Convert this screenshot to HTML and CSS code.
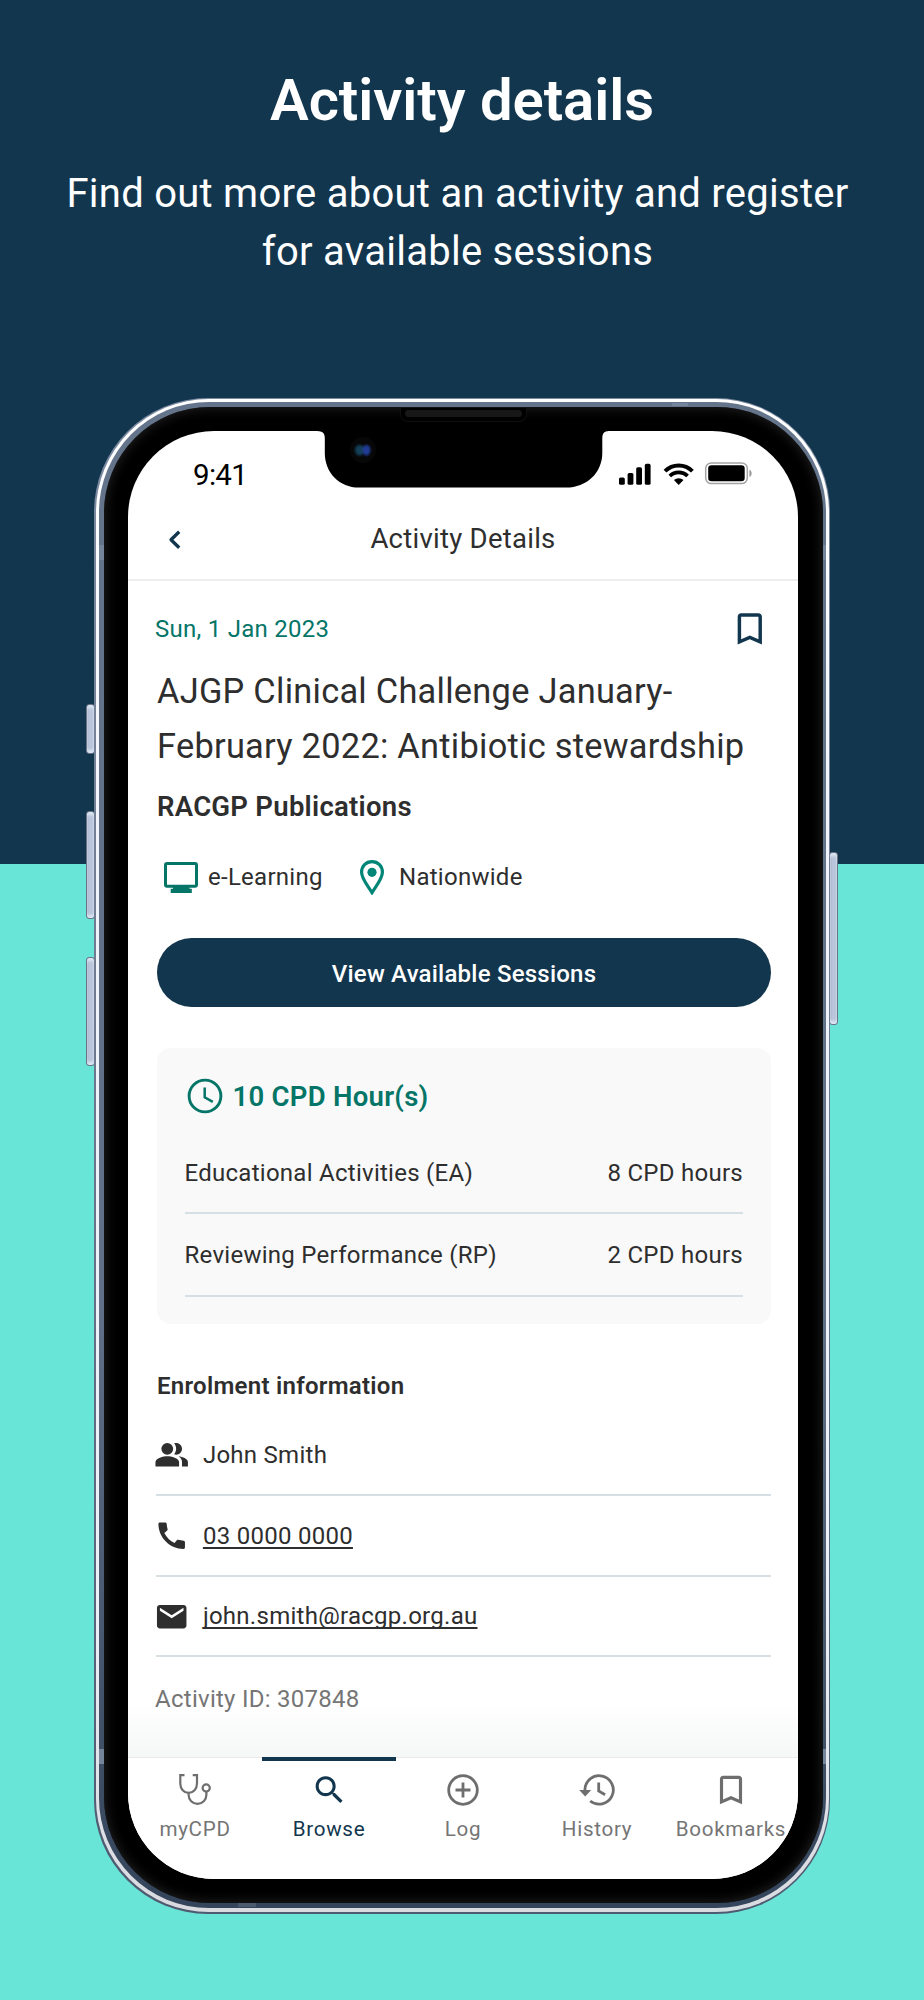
FILE: index.html
```html
<!DOCTYPE html>
<html lang="en">
<head>
<meta charset="utf-8">
<title>Activity details</title>
<link rel="stylesheet" href="styles.css">
</head>
<body>
<main class="poster">
  <h1 class="headline">Activity details</h1>
  <p class="tagline">Find out more about an activity and register<br>for available sessions</p>

  <div class="phone">
    <i class="key key-mute"></i><i class="key key-up"></i><i class="key key-down"></i><i class="key key-power"></i>
    <div class="edge"><div class="rim"><div class="band">
      <i class="antenna a-tl"></i><i class="antenna a-bl"></i><i class="antenna a-tr"></i><i class="antenna a-br"></i><i class="antenna a-top"></i><i class="antenna a-bot"></i>
      <div class="bezel">
      <div class="screen">
        <div class="status">
          <span class="clock">9:41</span>
          <svg class="status-icons" viewBox="0 0 136 24" width="136" height="24">
            <g><rect x="1" y="15.4" width="5.8" height="7.4" rx="1.6"/><rect x="9.6" y="11" width="5.8" height="11.8" rx="1.6"/><rect x="18.2" y="5.2" width="5.8" height="17.6" rx="1.6"/><rect x="26.8" y="1.8" width="5.8" height="21" rx="1.6"/></g>
            <g fill="none" stroke="#000"><path d="M47 9.2A19.3 19.3 0 0 1 74.400 9.2" stroke-width="3.9"/><path d="M51.800 14A12.700 12.700 0 0 1 69.600 14" stroke-width="3.7"/></g>
            <path d="M60.700 22.9L55.900 18.100A6.900 6.900 0 0 1 65.500 18.100Z"/>
            <rect x="87.700" y=".9" width="41.600" height="20.700" rx="5.600" fill="none" stroke="#000" stroke-opacity=".36" stroke-width="1.5"/>
            <rect x="90.200" y="3.300" width="36.500" height="16" rx="3.300"/>
            <path d="M131.400 7.700c3 1 3 6.200 0 7.200z" fill-opacity=".4"/>
          </svg>
        </div>
        <div class="appbar">
          <svg class="back" viewBox="0 0 14 22" width="14" height="22"><path d="M11.200 2.700L3 10.700l8.200 8" fill="none" stroke="#12364e" stroke-width="3.300" stroke-linejoin="round"/></svg>
          <span>Activity Details</span>
        </div>

        <div class="content">
          <div class="date-row">
            <span class="date">Sun, 1 Jan 2023</span>
            <svg class="save" viewBox="0 0 24 24" width="41.600" height="41.600"><path fill="#12364e" d="M17 3H7c-1.100 0-1.990.9-1.990 2L5 21l7-3 7 3V5c0-1.100-.9-2-2-2zm0 15l-5-2.180L7 18V5h10v13z"/></svg>
          </div>
          <h2 class="title">AJGP Clinical Challenge January-<br>February 2022: Antibiotic stewardship</h2>
          <div class="provider">RACGP Publications</div>
          <div class="meta">
            <svg class="monitor" viewBox="0 0 34 31" width="34" height="31"><rect x="1.500" y="1.500" width="31" height="22.800" rx="1.500" fill="none" stroke="#047567" stroke-width="3"/><path fill="#047567" d="M9 25h16.500v1.700h2.300V31H6.700v-4.300H9z"/></svg>
            <span class="m-learn">e-Learning</span>
            <svg class="pin" viewBox="0 0 24 35" width="24" height="35"><path d="M12 1.700C6 1.700 1.600 6.200 1.600 12.200c0 6.500 6 13.200 10.400 20.400 4.400-7.200 10.400-13.900 10.400-20.400C22.400 6.200 18 1.700 12 1.700z" fill="none" stroke="#008577" stroke-width="3.200"/><circle cx="12" cy="12.300" r="4.600" fill="#008577"/></svg>
            <span class="m-nation">Nationwide</span>
          </div>
          <button class="cta">View Available Sessions</button>

          <section class="card">
            <div class="hours">
              <svg viewBox="0 0 36 36" width="36" height="36" fill="none" stroke="#047567"><circle cx="18" cy="18" r="15.900" stroke-width="2.900"/><path d="M17.700 9.500v9.800l8.100 4.500" stroke-width="2.500"/></svg>
              <span>10 CPD Hour(s)</span>
            </div>
            <div class="cpd"><span>Educational Activities (EA)</span><span class="val">8 CPD hours</span></div>
            <div class="cpd"><span>Reviewing Performance (RP)</span><span class="val">2 CPD hours</span></div>
          </section>

          <h3 class="enrol">Enrolment information</h3>
          <div class="contact">
            <svg viewBox="0 0 24 24" width="35.400" height="35.400"><path d="M16.670 13.130C18.040 14.060 19 15.320 19 17v3h4v-3c0-2.180-3.570-3.470-6.330-3.870z"/><circle cx="9" cy="8" r="4"/><path d="M15 12c2.210 0 4-1.790 4-4s-1.790-4-4-4c-.47 0-.91.1-1.330.24C14.500 5.270 15 6.580 15 8s-.5 2.730-1.330 3.760c.42.14.86.24 1.330.24z"/><path d="M9 13c-2.670 0-8 1.340-8 4v3h16v-3c0-2.660-5.330-4-8-4z"/></svg>
            <span class="name">John Smith</span>
          </div>
          <div class="contact">
            <svg viewBox="0 0 24 24" width="35.400" height="35.400"><path d="M20.010 15.380c-1.230 0-2.420-.2-3.530-.56-.35-.12-.74-.03-1.010.24l-1.570 1.970c-2.830-1.350-5.480-3.900-6.890-6.830l1.950-1.660c.27-.28.35-.67.24-1.020-.37-1.110-.56-2.300-.56-3.530 0-.54-.45-.99-.99-.99H4.190C3.650 3 3 3.240 3 3.990 3 13.280 10.730 21 20.010 21c.71 0 .99-.63.99-1.180v-3.450c0-.54-.45-.99-.99-.99z"/></svg>
            <a class="tel">03 0000 0000</a>
          </div>
          <div class="contact">
            <svg viewBox="0 0 24 24" width="35.400" height="35.400"><path d="M20 4H4c-1.100 0-1.990.9-1.990 2L2 18c0 1.100.9 2 2 2h16c1.100 0 2-.9 2-2V6c0-1.100-.9-2-2-2zm0 4l-8 5-8-5V6l8 5 8-5v2z"/></svg>
            <a class="mail">john.smith@racgp.org.au</a>
          </div>
          <div class="activity-id">Activity ID: 307848</div>
        </div>

        <nav class="tabs">
          <div class="tab">
            <svg viewBox="0 0 38 38" width="38" height="38" fill="none" stroke="#6e6e6e" stroke-width="2.200"><path d="M8.500 4.200H4.300v8.300c0 5.400 3.600 9.300 8.300 9.300s8.400-3.900 8.400-9.300V4.200h-4.300M12.600 21.800v2c0 5.100 4 9 8.900 9s8.900-3.900 8.900-9v-3.500"/><circle cx="30.200" cy="17" r="3.600"/></svg>
            <span class="t1">myCPD</span>
          </div>
          <div class="tab active">
            <svg viewBox="0 0 24 24" width="37" height="37" fill="#12364e"><path d="M15.500 14h-.79l-.28-.27C15.410 12.590 16 11.110 16 9.500 16 5.910 13.090 3 9.500 3S3 5.910 3 9.500 5.910 16 9.500 16c1.610 0 3.090-.59 4.230-1.570l.27.28v.79l5 4.990L20.490 19l-4.990-5zm-6 0C7.010 14 5 11.990 5 9.500S7.010 5 9.500 5 14 7.010 14 9.500 11.990 14 9.500 14z"/></svg>
            <span class="t2">Browse</span>
          </div>
          <div class="tab">
            <svg viewBox="0 0 38 38" width="38" height="38" fill="none" stroke="#6e6e6e" stroke-width="2.800"><circle cx="19" cy="19" r="14.300"/><path d="M19 11.500v15M11.500 19h15"/></svg>
            <span class="t3">Log</span>
          </div>
          <div class="tab">
            <svg viewBox="0 0 38 38" width="38" height="38" fill="none" stroke="#6e6e6e" stroke-width="2.800"><path d="M6.900 19A14.200 14.200 0 1 1 12.200 30M20.700 11.500v8.400l6.400 3.800"/><path d="M1.200 18.900h12l-6 6.700z" fill="#6e6e6e" stroke="none"/></svg>
            <span class="t4">History</span>
          </div>
          <div class="tab">
            <svg viewBox="0 0 24 24" width="38" height="38" fill="#6e6e6e"><path d="M17 3H7c-1.100 0-1.990.9-1.990 2L5 21l7-3 7 3V5c0-1.100-.9-2-2-2zm0 15l-5-2.180L7 18V5h10v13z"/></svg>
            <span class="t5">Bookmarks</span>
          </div>
        </nav>

        <svg class="notch" viewBox="0 0 290 58" width="290" height="58">
          <path d="M0 0v.2c5 0 6.800 2.600 6.800 7V22c0 20 15 34.600 34 34.600h207.500c20 0 36-14.600 36-34.600V7.200c0-4.400 1.700-7 5.700-7V0z" fill="#000"/>
          <circle cx="45" cy="19" r="13" fill="#070707"/>
          <g class="lens"><ellipse cx="41.500" cy="19.200" rx="4.500" ry="5.500" fill="#14405a"/>
          <ellipse cx="48.500" cy="19.200" rx="4" ry="5.500" fill="#213b94"/></g>
        </svg>
      </div>
      <i class="speaker"></i>
    </div></div></div></div>
  </div>
</main>
</body>
</html>
```
FILE: styles.css
```css
* { box-sizing: border-box; }
body { margin: 0; font-family: Roboto, "Liberation Sans", sans-serif; color: #2e2e2e; }
h1, h2, h3, p { margin: 0; font-weight: 400; }
svg { display: block; flex: none; }

.poster {
  width: 924px; height: 2000px; padding-top: 60px; overflow: hidden;
  background: linear-gradient(#12364e 0 864px, #69e5d8 864px);
  color: #fff; text-align: center;
}
.headline { font-size: 58px; line-height: 80px; font-weight: 600; letter-spacing: -.05px; }
.tagline { margin-top: 25px; font-size: 40px; line-height: 58px; letter-spacing: .27px; padding-right: 9px; white-space: nowrap; }

.phone { position: relative; width: 736px; margin: 117px 0 0 94px; text-align: left; color: #2e2e2e; }
.edge { position: relative; padding: 1px 1.500px 1.500px; border-radius: 114px; background: linear-gradient(#7d8ba1, #6d7a90 40%, #4e5a70); }
.rim { padding: 3px 3px 4px; border-radius: 113px; background: linear-gradient(#fff, #f1f3fa 30%, #eef0f7 80%, #d8dae0); }
.band { position: relative; padding: 5px 3px 5px 5px; border-radius: 110px; background: linear-gradient(#64748b, #5f7088 60%, #34445a); }
.bezel {
  position: relative; padding: 24px; border-radius: 106px;
  background: #000; box-shadow: inset 0 0 12px 1px #222;
}
.screen { position: relative; display: flex; flex-direction: column; width: 670px; height: 1448px; margin: 0 auto; background: #fff; border-radius: 86px; overflow: hidden; }

.key { position: absolute; width: 9px; border-radius: 3px; border: 1px solid #6a7488; background: linear-gradient(90deg, #8d97ac, #bcc8de 40%, #adb9d1); box-shadow: inset 0 3px 3px #dce6f2, inset 0 -3px 3px #dce6f2; }
.key-mute { left: -8px; top: 306px; height: 50px; }
.key-up { left: -8px; top: 413px; height: 108px; }
.key-down { left: -8px; top: 559px; height: 109px; }
.key-power { right: -8px; top: 454px; height: 173px; }
.antenna { position: absolute; background: #73849b; }
.a-tl, .a-bl { left: 0; width: 5px; height: 15px; }
.a-tr, .a-br { right: 0; width: 3px; height: 15px; }
.a-tl, .a-tr { top: 143px; }
.a-bl, .a-br { bottom: 144px; }
.a-top { top: 1px; right: 138px; width: 16px; height: 3px; }
.a-bot { bottom: 1px; left: 139px; width: 18px; height: 4px; background: #4c5a6d; }
.speaker { position: absolute; top: 1px; left: 296px; width: 127px; height: 14px; border-radius: 0 0 8px 8px; border: 1px solid #0f0f0f; border-top: 0; background: #000; }
.speaker::after { content: ""; position: absolute; left: 4px; right: 4px; top: 2px; height: 7px; border-radius: 4px; background: #171717; }
.notch { position: absolute; top: 0; left: 190px; }
.lens { filter: blur(1.200px); }

.status { display: flex; align-items: center; justify-content: space-between; height: 88px; padding: 0 44px 0 65px; color: #000; }
.clock { font-size: 29.500px; letter-spacing: -.7px; }
.status-icons { margin-top: -2px; }
.appbar { position: relative; height: 62px; padding-bottom: 21px; border-bottom: 2px solid #ededed; display: flex; align-items: center; justify-content: center; font-size: 27.500px; letter-spacing: .26px; }
.back { position: absolute; left: 40px; top: 9.500px; }

.content { flex: 1; padding: 27px 27px 0 29px; background: linear-gradient(#fff 1120px, #f6f7f7); font-size: 24px; letter-spacing: .27px; }
.date-row { display: flex; align-items: center; justify-content: space-between; height: 42px; margin: 0 0 0 -2px; color: #047567; }
.title { margin-top: 14px; font-size: 34.400px; line-height: 55px; letter-spacing: .26px; white-space: nowrap; }
.provider { margin-top: 15px; font-size: 27.500px; line-height: 36px; font-weight: 600; letter-spacing: .26px; }
.meta { display: flex; align-items: center; height: 42px; margin-top: 31px; padding-left: 7px; }
.m-learn { margin-left: 10px; width: 116px; }
.pin { margin-left: 36px; }
.m-nation { margin-left: 15px; }
.cta { display: block; width: 100%; height: 69px; margin-top: 40px; padding: 2px 0 0; border: 0; border-radius: 35px; background: #12364e; color: #fff; font: 500 24px Roboto, sans-serif; letter-spacing: .22px; }
.card { height: 276px; margin-top: 41px; padding: 27px 28px 0 27.500px; border-radius: 14px; background: #f9f9f9; }
.hours { display: flex; align-items: center; gap: 10px; height: 42px; margin-bottom: 14.500px; padding-left: 2px; color: #047567; font-size: 27.500px; font-weight: 600; }
.cpd { display: flex; align-items: center; justify-content: space-between; height: 82.500px; padding-top: 2px; border-bottom: 2px solid #d6dfe3; }
.enrol { margin-top: 45px; line-height: 34px; font-size: 24px; font-weight: 600; }
.contact { display: flex; align-items: center; gap: 13.500px; height: 80.800px; margin: 0 0 0 -1.500px; padding-top: 1px; border-bottom: 2px solid #d6dfe3; }
.enrol + .contact { margin-top: 12px; }
.contact svg { fill: #2e2e2e; margin-left: -1.500px; }
.contact a { text-decoration: underline; text-decoration-thickness: 1.500px; text-underline-offset: 3px; text-decoration-skip-ink: none; }
.activity-id { margin: 25px 0 0 -2px; line-height: 34px; color: #757575; }

.tabs { display: flex; height: 122px; background: #fff; border-top: 1px solid #e9e9e9; }
.tab { position: relative; width: 134px; display: flex; flex-direction: column; align-items: center; padding-top: 12.500px; font-size: 20.600px; letter-spacing: .7px; color: #757575; }
.tab svg { height: 38px; }
.tab span { line-height: 28px; margin-top: 6px; }
.active { color: #12364e; }
.active::before { content: ""; position: absolute; top: -1px; left: 0; right: 0; height: 4px; background: #12364e; }
```
